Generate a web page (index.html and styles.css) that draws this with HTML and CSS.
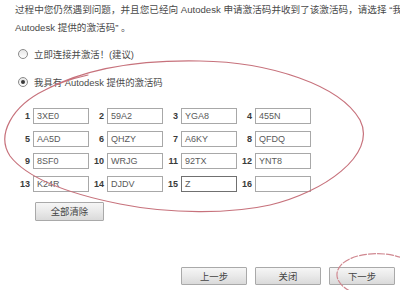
FILE: index.html
```html
<!DOCTYPE html>
<html lang="zh-CN">
<head>
<meta charset="utf-8">
<title>激活</title>
<link rel="stylesheet" href="styles.css">
</head>
<body>
<div class="page">
  <p class="intro">过程中您仍然遇到问题，并且您已经向 Autodesk 申请激活码并收到了该激活码，请选择 “我具有<br>Autodesk 提供的激活码” 。</p>

  <div class="options">
    <label class="opt"><span class="radio"></span>立即连接并激活！(建议)</label>
    <label class="opt"><span class="radio on"></span>我具有 Autodesk 提供的激活码</label>
  </div>

  <div class="codes">
    <div class="cell"><span class="num">1</span><span class="box">3XE0</span></div>
    <div class="cell"><span class="num">2</span><span class="box">59A2</span></div>
    <div class="cell"><span class="num">3</span><span class="box">YGA8</span></div>
    <div class="cell"><span class="num">4</span><span class="box">455N</span></div>
    <div class="cell"><span class="num">5</span><span class="box">AA5D</span></div>
    <div class="cell"><span class="num">6</span><span class="box">QHZY</span></div>
    <div class="cell"><span class="num">7</span><span class="box">A6KY</span></div>
    <div class="cell"><span class="num">8</span><span class="box">QFDQ</span></div>
    <div class="cell"><span class="num">9</span><span class="box">8SF0</span></div>
    <div class="cell"><span class="num">10</span><span class="box">WRJG</span></div>
    <div class="cell"><span class="num">11</span><span class="box">92TX</span></div>
    <div class="cell"><span class="num">12</span><span class="box">YNT8</span></div>
    <div class="cell"><span class="num">13</span><span class="box">K24R</span></div>
    <div class="cell"><span class="num">14</span><span class="box">DJDV</span></div>
    <div class="cell"><span class="num">15</span><span class="box active">Z</span></div>
    <div class="cell"><span class="num">16</span><span class="box"></span></div>
  </div>

  <div class="clear-row"><button class="btn clear">全部清除</button></div>

  <div class="nav">
    <button class="btn nav-btn">上一步</button>
    <button class="btn nav-btn">关闭</button>
    <button class="btn nav-btn next">下一步</button>
  </div>

  <svg class="marks" width="400" height="290" viewBox="0 0 400 290" aria-hidden="true">
    <path d="M 45 90 C 90 66, 150 60, 200 61 C 270 62, 340 85, 360 120 C 378 155, 322 193, 270 205 C 230 214, 170 214, 120 204 C 80 196, 30 182, 10 156 C -4 135, 12 106, 45 90 C 60 82, 75 78, 88 75" />
    <path class="small" d="M 402 258 C 385 251, 355 252, 342 264 C 332 274, 338 285, 350 291" />
  </svg>
</div>
</body>
</html>
```

FILE: styles.css
```css
* { box-sizing: border-box; }

html, body {
  margin: 0;
  padding: 0;
  background: #ffffff;
}

body {
  width: 400px;
  height: 290px;
  overflow: hidden;
  font-family: "Liberation Sans", "Noto Sans CJK SC", sans-serif;
  font-size: 9.4px;
  color: #4a4a4a;
}

.page {
  position: relative;
  width: 400px;
  height: 290px;
  overflow: hidden;
}

.intro {
  margin: 0;
  padding: 1px 0 0 15px;
  font-size: 9.6px;
  line-height: 18px;
  white-space: nowrap;
}

.options {
  display: flex;
  flex-direction: column;
  gap: 10px;
  padding: 8px 0 0 18px;
}

.opt {
  display: flex;
  align-items: center;
  gap: 6px;
  height: 18px;
}

.radio {
  width: 10px;
  height: 10px;
  border-radius: 50%;
  border: 1px solid #8a8a8a;
  background: linear-gradient(#e6e6e6, #ffffff);
  display: flex;
  align-items: center;
  justify-content: center;
}

.radio.on::after {
  content: "";
  width: 4px;
  height: 4px;
  border-radius: 50%;
  background: #3a3a3a;
}

.codes {
  display: grid;
  grid-template-columns: repeat(4, 74px);
  row-gap: 6.5px;
  padding: 17px 0 0 15px;
}

.cell {
  display: flex;
  align-items: center;
}

.num {
  width: 15px;
  margin-right: 3px;
  text-align: right;
  font-weight: bold;
  font-size: 9px;
  color: #3a3a3a;
}

.box {
  width: 56px;
  height: 16px;
  border: 1px solid #a8a8a8;
  background: #fff;
  padding-left: 3px;
  line-height: 14px;
  font-size: 9px;
  color: #5a5a5a;
}

.box.active {
  border-color: #707070;
}

.clear-row {
  padding: 10px 0 0 35px;
}

.btn {
  font-family: "Liberation Sans", "Noto Sans CJK SC", sans-serif;
  font-size: 9.4px;
  color: #444;
  border: 1px solid #a9a9a9;
  border-radius: 1px;
  background: linear-gradient(#f6f6f6 0%, #e9e9e9 50%, #dadada 100%);
  padding: 0;
  margin: 0;
}

.clear {
  width: 69px;
  height: 19px;
}

.nav {
  display: flex;
  justify-content: flex-end;
  gap: 8px;
  padding: 46px 5px 0 0;
}

.nav-btn {
  width: 66px;
  height: 18px;
}

.marks {
  position: absolute;
  left: 0;
  top: 0;
  pointer-events: none;
}

.marks path {
  fill: none;
  stroke: #c7727c;
  stroke-width: 1.2;
  stroke-linecap: round;
}

.marks path.small {
  stroke: #d08890;
  stroke-dasharray: 7 2;
}
```
